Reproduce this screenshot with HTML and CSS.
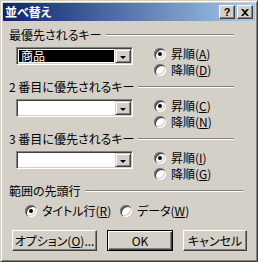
FILE: index.html
```html
<!DOCTYPE html>
<html lang="ja">

<head>
    <meta charset="UTF-8">
    <link rel="stylesheet" href="styles.css">
    <title>並べ替え</title>
</head>

<body>
    <div class="window">
        <div class="titlebar">
            <span class="title">並べ替え</span>
            <div class="cap-buttons">
                <span class="cap-btn">?</span>
                <span class="cap-btn">
                    <svg width="8" height="7" viewBox="0 0 8 7">
                        <path d="M0 0h2l2 2 2-2h2L5 3.5 8 7H6L4 5 2 7H0l3-3.5z" fill="#000" />
                    </svg>
                </span>
            </div>
        </div>

        <div class="client">
            <div class="group">
                <div class="group-title"><span>最優先されるキー</span><i class="etch"></i></div>
                <div class="key-row">
                    <div class="combo">
                        <span class="combo-text selected">商品</span>
                        <span class="combo-btn"><i class="arrow"></i></span>
                    </div>
                    <div class="radios">
                        <div class="radio-item"><span class="radio checked"></span><span>昇順(<u>A</u>)</span></div>
                        <div class="radio-item"><span class="radio"></span><span>降順(<u>D</u>)</span></div>
                    </div>
                </div>
            </div>

            <div class="group">
                <div class="group-title"><span>2 番目に優先されるキー</span><i class="etch"></i></div>
                <div class="key-row">
                    <div class="combo">
                        <span class="combo-text"></span>
                        <span class="combo-btn"><i class="arrow"></i></span>
                    </div>
                    <div class="radios">
                        <div class="radio-item"><span class="radio checked"></span><span>昇順(<u>C</u>)</span></div>
                        <div class="radio-item"><span class="radio"></span><span>降順(<u>N</u>)</span></div>
                    </div>
                </div>
            </div>

            <div class="group">
                <div class="group-title"><span>3 番目に優先されるキー</span><i class="etch"></i></div>
                <div class="key-row">
                    <div class="combo">
                        <span class="combo-text"></span>
                        <span class="combo-btn"><i class="arrow"></i></span>
                    </div>
                    <div class="radios">
                        <div class="radio-item"><span class="radio checked"></span><span>昇順(<u>I</u>)</span></div>
                        <div class="radio-item"><span class="radio"></span><span>降順(<u>G</u>)</span></div>
                    </div>
                </div>
            </div>

            <div class="group-title wide"><span>範囲の先頭行</span><i class="etch"></i></div>
            <div class="header-row">
                <div class="radio-item first"><span class="radio checked"></span><span>タイトル行(<u>R</u>)</span></div>
                <div class="radio-item"><span class="radio"></span><span>データ(<u>W</u>)</span></div>
            </div>

            <div class="buttons">
                <div class="btn options"><span>オプション(<u>O</u>)...</span></div>
                <div class="btn ok default">OK</div>
                <div class="btn cancel">キャンセル</div>
            </div>
        </div>
    </div>
</body>

</html>
```

FILE: styles.css
```css
body {
    margin: 0;
    background: #d4d0c8;
}

.window {
    width: 258px;
    height: 262px;
    box-sizing: border-box;
    background: #d4d0c8;
    border: 1px solid;
    border-color: #d4d0c8 #404040 #404040 #d4d0c8;
    box-shadow: inset 1px 1px #fff, inset -1px -1px #808080;
    padding: 2px;
    font-family: "Noto Sans CJK JP", sans-serif;
    font-feature-settings: "palt";
    font-size: 12px;
    line-height: 14px;
    color: #000;
}

/* title bar */
.titlebar {
    height: 18px;
    display: flex;
    align-items: center;
    justify-content: space-between;
    padding: 0 2px 0 2px;
    background: linear-gradient(to right, #0a246a, #a6caf0);
}

.title {
    color: #fff;
    font-weight: bold;
}

.cap-buttons {
    display: flex;
    gap: 2px;
}

.cap-btn {
    width: 16px;
    height: 14px;
    box-sizing: border-box;
    display: flex;
    align-items: center;
    justify-content: center;
    background: #d4d0c8;
    border: 1px solid;
    border-color: #fff #404040 #404040 #fff;
    box-shadow: inset -1px -1px #808080;
    font-family: "Liberation Sans", sans-serif;
    font-weight: bold;
    font-size: 11px;
}

/* client area */
.client {
    padding: 7px 0 0 6px;
}

.group-title {
    width: 225px;
    height: 14px;
    display: flex;
    align-items: center;
    gap: 4px;
}

.group-title.wide {
    width: 234px;
    margin-top: 2px;
}

.etch {
    flex: 1;
    height: 0;
    border-top: 1px solid #808080;
    border-bottom: 1px solid #fff;
}

.key-row {
    display: flex;
    height: 32px;
    margin: 4px 0 2px 7px;
}

.combo {
    width: 117px;
    height: 18px;
    margin-top: 1px;
    box-sizing: border-box;
    display: flex;
    padding: 1px;
    background: #fff;
    border: 1px solid;
    border-color: #808080 #fff #fff #808080;
    box-shadow: inset 1px 1px #404040, inset -1px -1px #d4d0c8;
}

.combo-text {
    flex: 1;
    padding-left: 2px;
}

.combo-text.selected {
    background: #000;
    color: #fff;
    margin: 1px 1px 1px 1px;
    line-height: 12px;
}

.combo-btn {
    width: 16px;
    height: 14px;
    box-sizing: border-box;
    display: flex;
    align-items: center;
    justify-content: center;
    background: #d4d0c8;
    border: 1px solid;
    border-color: #d4d0c8 #404040 #404040 #d4d0c8;
    box-shadow: inset 1px 1px #fff, inset -1px -1px #808080;
}

.arrow {
    width: 0;
    height: 0;
    margin-top: 2px;
    border-left: 3px solid transparent;
    border-right: 3px solid transparent;
    border-top: 3px solid #000;
}

.radios {
    display: flex;
    flex-direction: column;
    margin-left: 21px;
}

.radio-item {
    height: 16px;
    display: flex;
    align-items: center;
    gap: 5px;
    white-space: nowrap;
}

.radio {
    position: relative;
    width: 12px;
    height: 12px;
    border-radius: 50%;
    background: #fff;
    box-shadow: inset 1px 1px #808080, inset 2px 2px #404040, inset -1px -1px #fff, inset -2px -2px #d4d0c8;
}

.radio.checked::after {
    content: "";
    position: absolute;
    left: 4px;
    top: 4px;
    width: 4px;
    height: 4px;
    border-radius: 50%;
    background: #000;
}

.header-row {
    display: flex;
    margin: 5px 0 0 16px;
}

.header-row .first {
    width: 95px;
}

/* push buttons */
.buttons {
    display: flex;
    gap: 10px;
    margin: 11px 0 0 3px;
}

.btn {
    height: 21px;
    box-sizing: border-box;
    display: flex;
    align-items: center;
    justify-content: center;
    background: #d4d0c8;
    border: 1px solid;
    border-color: #fff #404040 #404040 #fff;
    box-shadow: inset -1px -1px #808080;
    white-space: nowrap;
}

.btn.default {
    border-color: #000;
    box-shadow: inset 1px 1px #fff, inset -1px -1px #404040, inset -2px -2px #808080;
}

.options {
    width: 85px;
}

.ok {
    width: 66px;
}

.cancel {
    width: 64px;
}
```
